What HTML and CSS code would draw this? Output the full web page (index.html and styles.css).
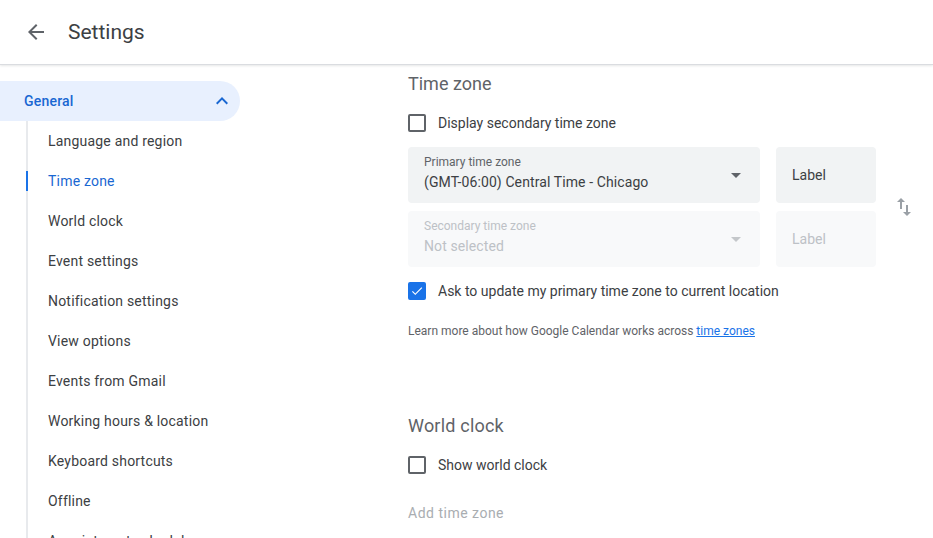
FILE: index.html
```html
<!DOCTYPE html>
<html lang="en">
<head>
    <meta charset="UTF-8">
    <meta name="viewport" content="width=device-width, initial-scale=1.0">
    <title>Settings</title>
    <link rel="stylesheet" href="styles.css">
</head>
<body>
    <header class="topbar">
        <button class="back-btn" aria-label="Back">
            <svg viewBox="0 0 24 24" width="24" height="24"><path d="M20 11H7.83l5.59-5.59L12 4l-8 8 8 8 1.41-1.41L7.83 13H20v-2z"/></svg>
        </button>
        <h1>Settings</h1>
    </header>

    <div class="page">
        <nav class="sidebar">
            <div class="nav-group">
                <span>General</span>
                <svg viewBox="0 0 24 24" width="24" height="24"><path d="M12 8l-6 6 1.41 1.41L12 10.83l4.59 4.58L18 14z"/></svg>
            </div>
            <ul class="nav-list">
                <li>Language and region</li>
                <li class="active">Time zone</li>
                <li>World clock</li>
                <li>Event settings</li>
                <li>Notification settings</li>
                <li>View options</li>
                <li>Events from Gmail</li>
                <li>Working hours &amp; location</li>
                <li>Keyboard shortcuts</li>
                <li>Offline</li>
                <li>Appointment schedules</li>
            </ul>
        </nav>

        <main class="content">
            <h2 class="section-title">Time zone</h2>
            <label class="check-row first">
                <span class="checkbox"></span>
                Display secondary time zone
            </label>

            <div class="tz-grid">
                <div class="select-box">
                    <div class="select-text">
                        <span class="select-label">Primary time zone</span>
                        <span class="select-value">(GMT-06:00) Central Time - Chicago</span>
                    </div>
                    <svg viewBox="0 0 24 24" width="24" height="24"><path d="M7 10l5 5 5-5z"/></svg>
                </div>
                <div class="label-box">Label</div>
                <div class="swap">
                    <svg viewBox="0 0 24 24" width="24" height="24"><path d="M16 17.01V10h-2v7.01h-3L15 21l4-3.99h-3zM9 3L5 6.99h3V14h2V6.99h3L9 3z"/></svg>
                </div>
                <div class="select-box disabled">
                    <div class="select-text">
                        <span class="select-label">Secondary time zone</span>
                        <span class="select-value">Not selected</span>
                    </div>
                    <svg viewBox="0 0 24 24" width="24" height="24"><path d="M7 10l5 5 5-5z"/></svg>
                </div>
                <div class="label-box disabled">Label</div>
            </div>

            <label class="check-row second">
                <span class="checkbox checked">
                    <svg viewBox="0 0 24 24" width="18" height="18"><path d="M9 16.17L4.83 12l-1.42 1.41L9 19 21 7l-1.41-1.41z"/></svg>
                </span>
                Ask to update my primary time zone to current location
            </label>

            <p class="help">Learn more about how Google Calendar works across <a href="#">time zones</a></p>

            <h2 class="section-title world">World clock</h2>
            <label class="check-row first">
                <span class="checkbox"></span>
                Show world clock
            </label>
            <div class="add-zone">Add time zone</div>
        </main>
    </div>
</body>
</html>
```

FILE: styles.css
```css
body {
    margin: 0;
    height: 538px;
    overflow: hidden;
    background: #fff;
    color: #3c4043;
    font-family: Roboto, "Noto Sans", Arial, sans-serif;
    font-size: 14px;
}
.topbar {
    height: 64px;
    display: flex;
    align-items: center;
    border-bottom: 1px solid #dadce0;
    box-shadow: 0 1px 2px rgba(60, 64, 67, 0.12);
}
.back-btn {
    width: 48px;
    height: 48px;
    margin-left: 12px;
    padding: 0;
    border: none;
    background: none;
    display: flex;
    align-items: center;
    justify-content: center;
    fill: #5f6368;
}
.topbar h1 {
    margin: 0 0 0 8px;
    font-size: 21px;
    font-weight: 400;
    color: #3c4043;
}
.page {
    display: flex;
}
.sidebar {
    width: 256px;
    flex-shrink: 0;
    padding-top: 16px;
    letter-spacing: 0.2px;
}
.nav-group {
    width: 240px;
    height: 40px;
    box-sizing: border-box;
    padding: 0 6px 0 24px;
    display: flex;
    align-items: center;
    justify-content: space-between;
    background: #e8f0fe;
    border-radius: 0 20px 20px 0;
    color: #1967d2;
    font-weight: 500;
    fill: #1967d2;
}
.nav-list {
    list-style: none;
    margin: 0 0 0 26px;
    padding: 0;
    border-left: 2px solid #e8eaed;
}
.nav-list li {
    position: relative;
    height: 40px;
    line-height: 40px;
    padding-left: 20px;
    color: #3c4043;
}
.nav-list li.active {
    color: #1967d2;
}
.nav-list li.active::before {
    content: '';
    position: absolute;
    left: -2px;
    top: 10px;
    width: 2px;
    height: 20px;
    background: #1a73e8;
}
.content {
    padding: 7px 0 0 152px;
}
.section-title {
    margin: 0;
    font-size: 18px;
    line-height: 24px;
    font-weight: 400;
    color: #5f6368;
}
.section-title.world {
    margin-top: 75px;
    letter-spacing: 0.2px;
}
.check-row {
    display: flex;
    align-items: center;
    height: 24px;
    gap: 12px;
    color: #3c4043;
}
.check-row.first {
    margin-top: 15px;
}
.check-row.second {
    margin-top: 12px;
}
.checkbox {
    width: 18px;
    height: 18px;
    box-sizing: border-box;
    border: 2px solid #5f6368;
    border-radius: 2px;
    display: flex;
    align-items: center;
    justify-content: center;
}
.checkbox.checked {
    background: #1a73e8;
    border-color: #1a73e8;
    fill: #fff;
}
.checkbox.checked svg {
    width: 16px;
    height: 16px;
}
.tz-grid {
    margin-top: 12px;
    display: grid;
    grid-template-columns: 352px 100px 24px;
    grid-template-rows: 56px 56px;
    column-gap: 16px;
    row-gap: 8px;
}
.select-box {
    background: #f1f3f4;
    border-radius: 4px;
    display: flex;
    align-items: center;
    justify-content: space-between;
    padding: 0 12px 0 16px;
    fill: #5f6368;
}
.select-text {
    align-self: flex-start;
    padding-top: 7px;
    display: flex;
    flex-direction: column;
}
.select-label {
    font-size: 12px;
    line-height: 16px;
    color: #5f6368;
}
.select-value {
    font-size: 14px;
    line-height: 20px;
    color: #3c4043;
    margin-top: 2px;
    letter-spacing: 0.1px;
}
.select-box.disabled {
    background: #f8f9fa;
    fill: #c4c7ca;
}
.select-box.disabled .select-label,
.select-box.disabled .select-value {
    color: #bdc1c6;
}
.label-box {
    background: #f1f3f4;
    border-radius: 4px;
    padding-left: 16px;
    display: flex;
    align-items: center;
    color: #3c4043;
}
.label-box.disabled {
    background: #f8f9fa;
    color: #bdc1c6;
}
.swap {
    grid-column: 3;
    grid-row: 1 / span 2;
    display: flex;
    align-items: center;
    fill: #9aa0a6;
}
.help {
    margin: 20px 0 0;
    font-size: 12px;
    line-height: 16px;
    color: #5f6368;
}
.help a {
    color: #1a73e8;
}
.add-zone {
    margin-top: 26px;
    line-height: 20px;
    color: #a9adb1;
    letter-spacing: 0.5px;
}
```
